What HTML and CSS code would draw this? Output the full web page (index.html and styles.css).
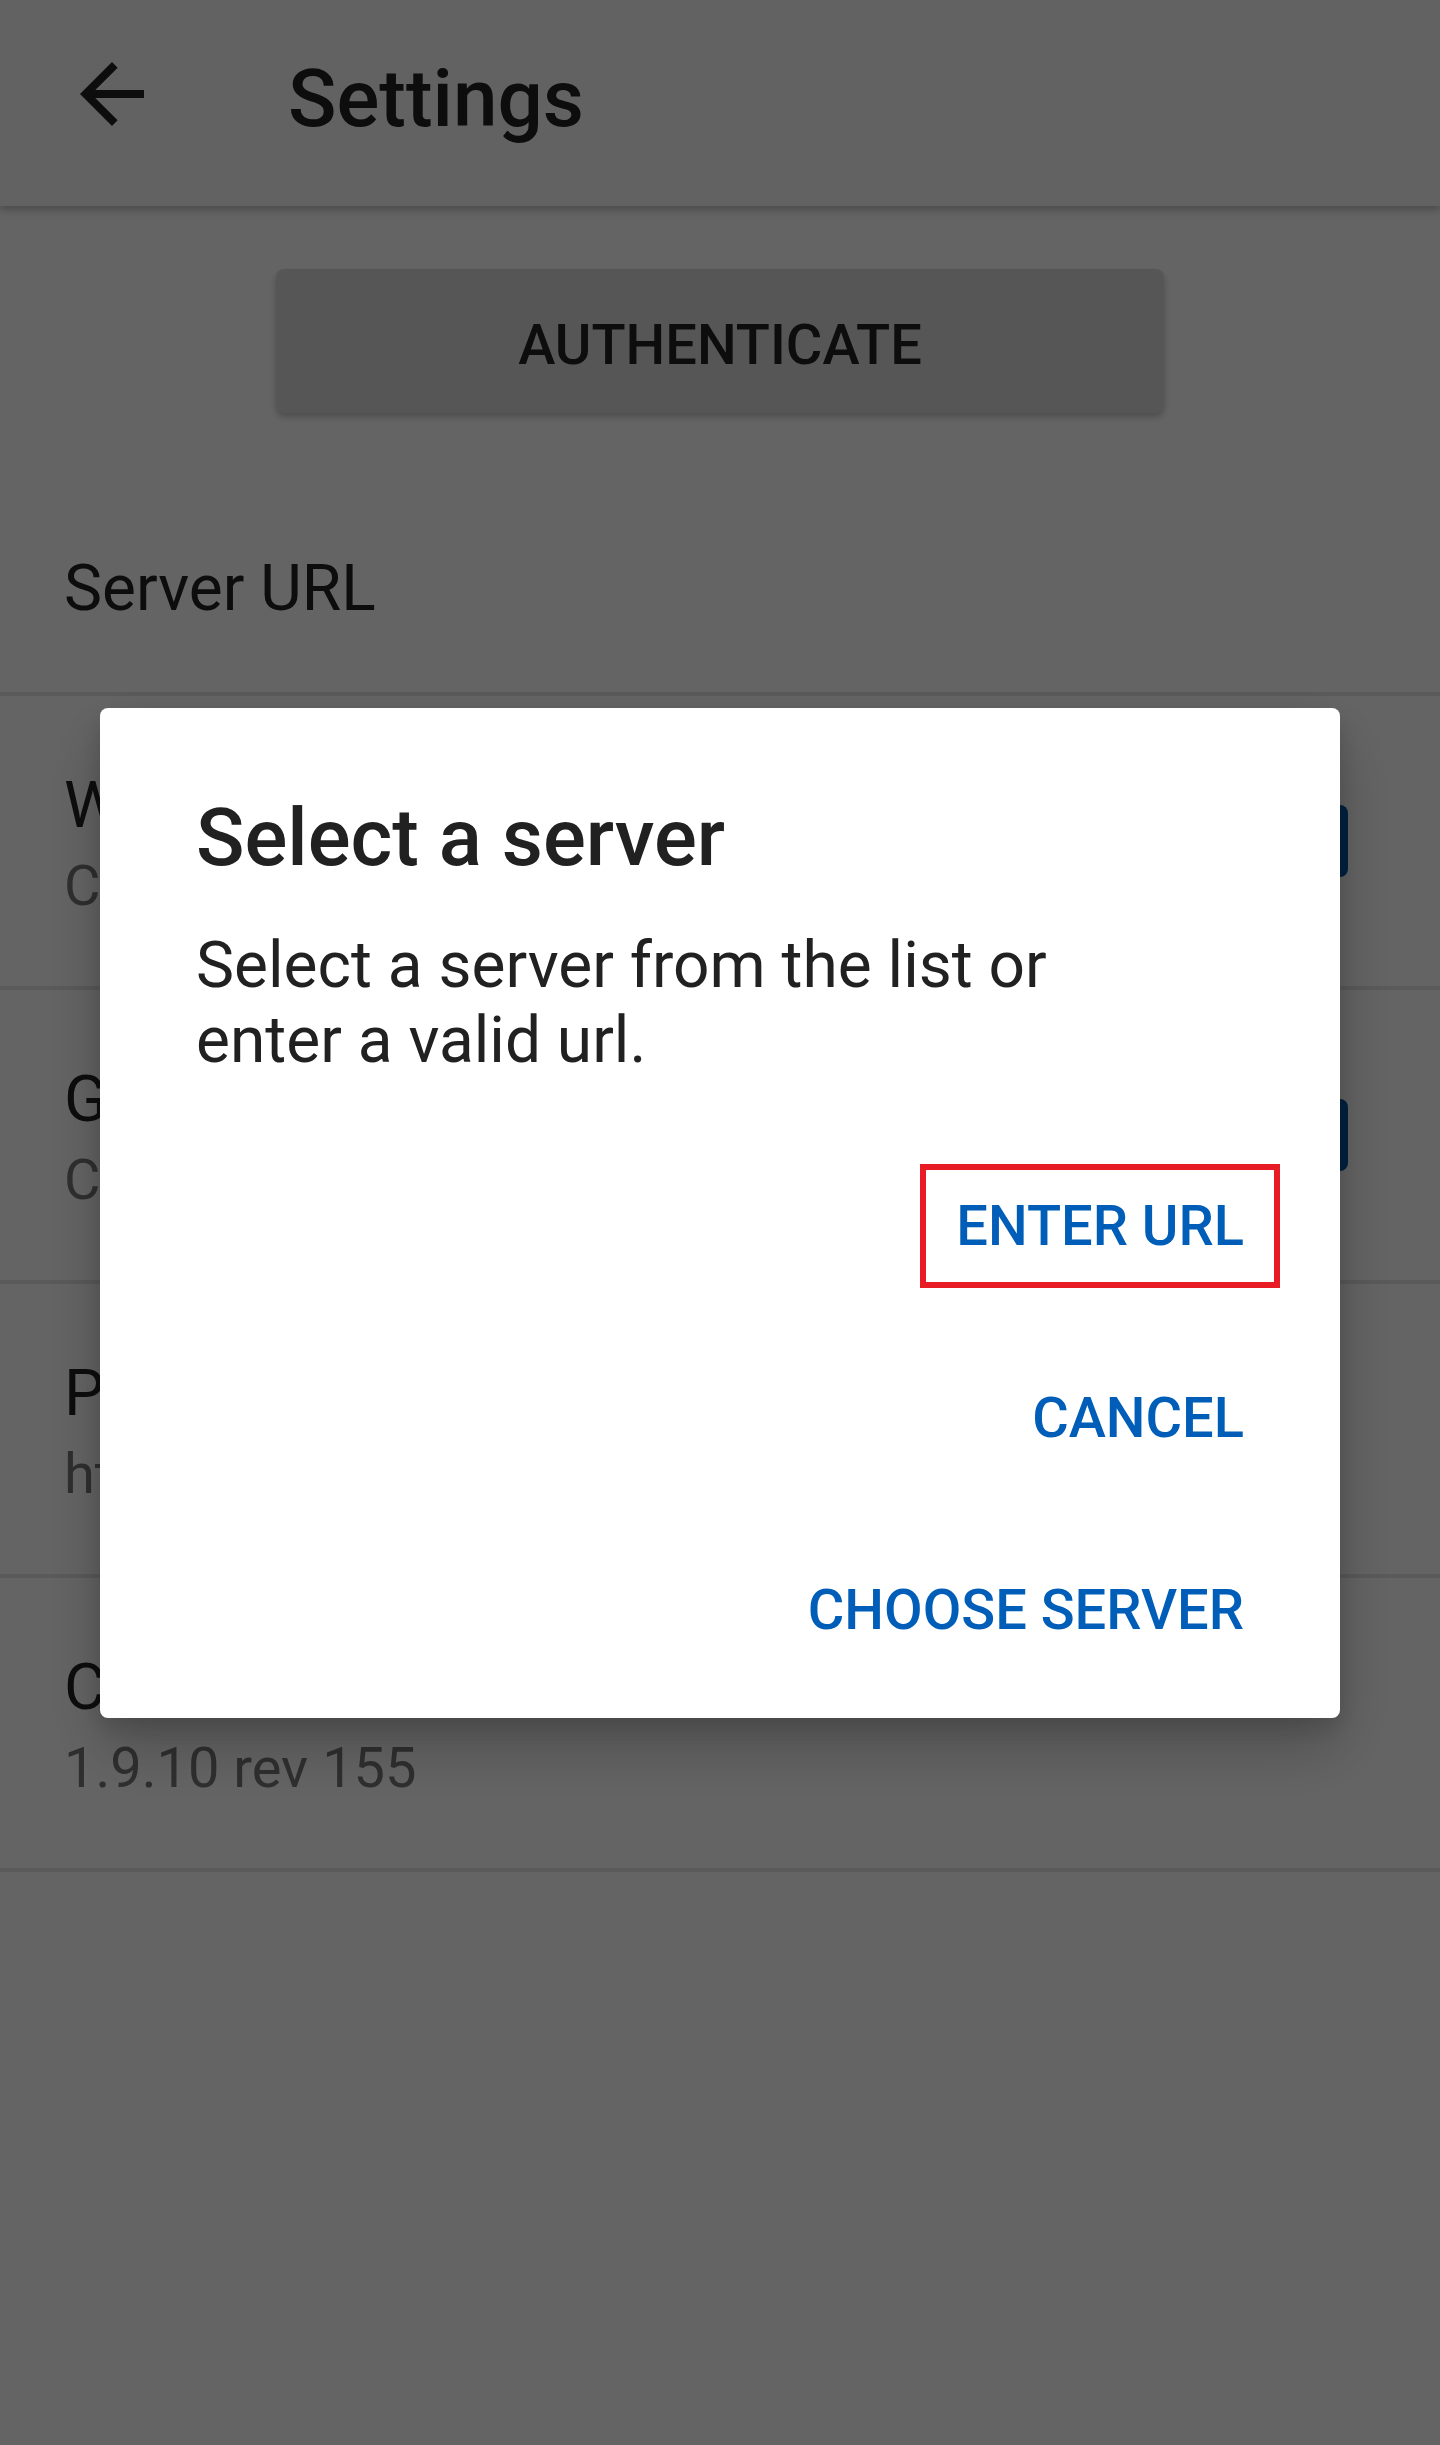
FILE: index.html
```html
<!DOCTYPE html>
<html lang="en">
<head>
    <meta charset="UTF-8">
    <meta name="viewport" content="width=device-width, initial-scale=1.0">
    <title>Settings</title>
    <link rel="stylesheet" href="styles.css">
</head>
<body>
    <header class="toolbar">
        <div class="nav-btn">
            <svg class="back-icon" viewBox="0 0 24 24"><path d="M20 11H7.83l5.59-5.59L12 4l-8 8 8 8 1.41-1.41L7.83 13H20v-2z"/></svg>
        </div>
        <h1 class="toolbar-title">Settings</h1>
    </header>

    <div class="auth-wrap">
        <button class="auth-btn">AUTHENTICATE</button>
    </div>

    <div class="pref single">
        <div class="pref-text">
            <div class="pref-title">Server URL</div>
        </div>
    </div>
    <div class="pref">
        <div class="pref-text">
            <div class="pref-title">Wifi only</div>
            <div class="pref-summary">Check to upload only on wifi</div>
        </div>
        <div class="check"></div>
    </div>
    <div class="pref">
        <div class="pref-text">
            <div class="pref-title">GPS location</div>
            <div class="pref-summary">Check to attach location</div>
        </div>
        <div class="check"></div>
    </div>
    <div class="pref">
        <div class="pref-text">
            <div class="pref-title">Privacy policy</div>
            <div class="pref-summary">https://example.org/privacy</div>
        </div>
    </div>
    <div class="pref">
        <div class="pref-text">
            <div class="pref-title">Current version</div>
            <div class="pref-summary">1.9.10 rev 155</div>
        </div>
    </div>

    <!-- dialog over a dimmed page -->
    <div class="scrim">
        <div class="dialog">
            <h2 class="dialog-title">Select a server</h2>
            <p class="dialog-body">Select a server from the list or<br>enter a valid url.</p>
            <div class="dialog-actions">
                <button class="action highlight">ENTER URL</button>
                <button class="action">CANCEL</button>
                <button class="action">CHOOSE SERVER</button>
            </div>
        </div>
    </div>
</body>
</html>
```

FILE: styles.css
```css
body {
    margin: 0;
    padding: 0;
    background: #fafafa;
    font-family: Roboto, "Noto Sans", sans-serif;
    color: #212121;
}
.toolbar {
    box-sizing: border-box;
    height: 206px;
    padding-bottom: 18px;
    display: flex;
    align-items: center;
    background: #f5f5f5;
    box-shadow: 0 4px 8px rgba(0, 0, 0, 0.25);
    position: relative;
}
.nav-btn {
    width: 288px;
    height: 96px;
    flex-shrink: 0;
}
.back-icon {
    width: 96px;
    height: 96px;
    margin-left: 64px;
    fill: #212121;
    display: block;
}
.toolbar-title {
    margin: 9px 0 0 0;
    font-size: 80px;
    line-height: 94px;
    font-weight: 500;
}
.auth-wrap {
    padding-top: 63px;
}
.auth-btn {
    display: block;
    margin: 0 auto;
    width: 888px;
    height: 144px;
    padding: 8px 0 0 0;
    border: none;
    border-radius: 8px;
    background: #d6d6d6;
    box-shadow: 0 4px 6px rgba(0, 0, 0, 0.22);
    font-family: Roboto, sans-serif;
    font-size: 56px;
    font-weight: 500;
    color: #212121;
}
.pref {
    box-sizing: border-box;
    height: 294px;
    display: flex;
    align-items: flex-start;
    border-bottom: 4px solid #e0e0e0;
}
.pref.single {
    height: 283px;
}
.pref-text {
    flex: 1;
    padding: 72px 0 0 64px;
}
.single .pref-text {
    padding-top: 138px;
}
.pref-title {
    font-size: 64px;
    line-height: 75px;
    color: #212121;
}
.pref-summary {
    margin-top: 10px;
    font-size: 56px;
    line-height: 66px;
    color: #757575;
}
.check {
    width: 72px;
    height: 72px;
    margin: 109px 92px 0 0;
    border-radius: 8px;
    background: #00539f;
}
.scrim {
    position: fixed;
    top: 0;
    left: 0;
    right: 0;
    bottom: 0;
    background: rgba(0, 0, 0, 0.6);
    display: flex;
    justify-content: center;
    align-items: flex-start;
    padding-top: 708px;
}
.dialog {
    box-sizing: border-box;
    width: 1240px;
    padding: 83px 0 46px 96px;
    background: #fff;
    border-radius: 8px;
    box-shadow: 0 30px 60px rgba(0, 0, 0, 0.22), 0 10px 24px rgba(0, 0, 0, 0.14);
}
.dialog-title {
    margin: 0;
    font-size: 80px;
    line-height: 94px;
    font-weight: 500;
    color: #212121;
}
.dialog-body {
    margin: 43px 0 0 0;
    font-size: 64px;
    line-height: 75px;
    color: #212121;
}
.dialog-actions {
    margin-top: 86px;
    display: flex;
    flex-direction: column;
    align-items: flex-end;
    gap: 68px;
}
.action {
    height: 124px;
    margin-right: 60px;
    padding: 0 30px;
    border: 6px solid transparent;
    background: none;
    font-family: Roboto, sans-serif;
    font-size: 56px;
    font-weight: 500;
    color: #005eb8;
}
.action.highlight {
    border-color: #e81c24;
}
```
